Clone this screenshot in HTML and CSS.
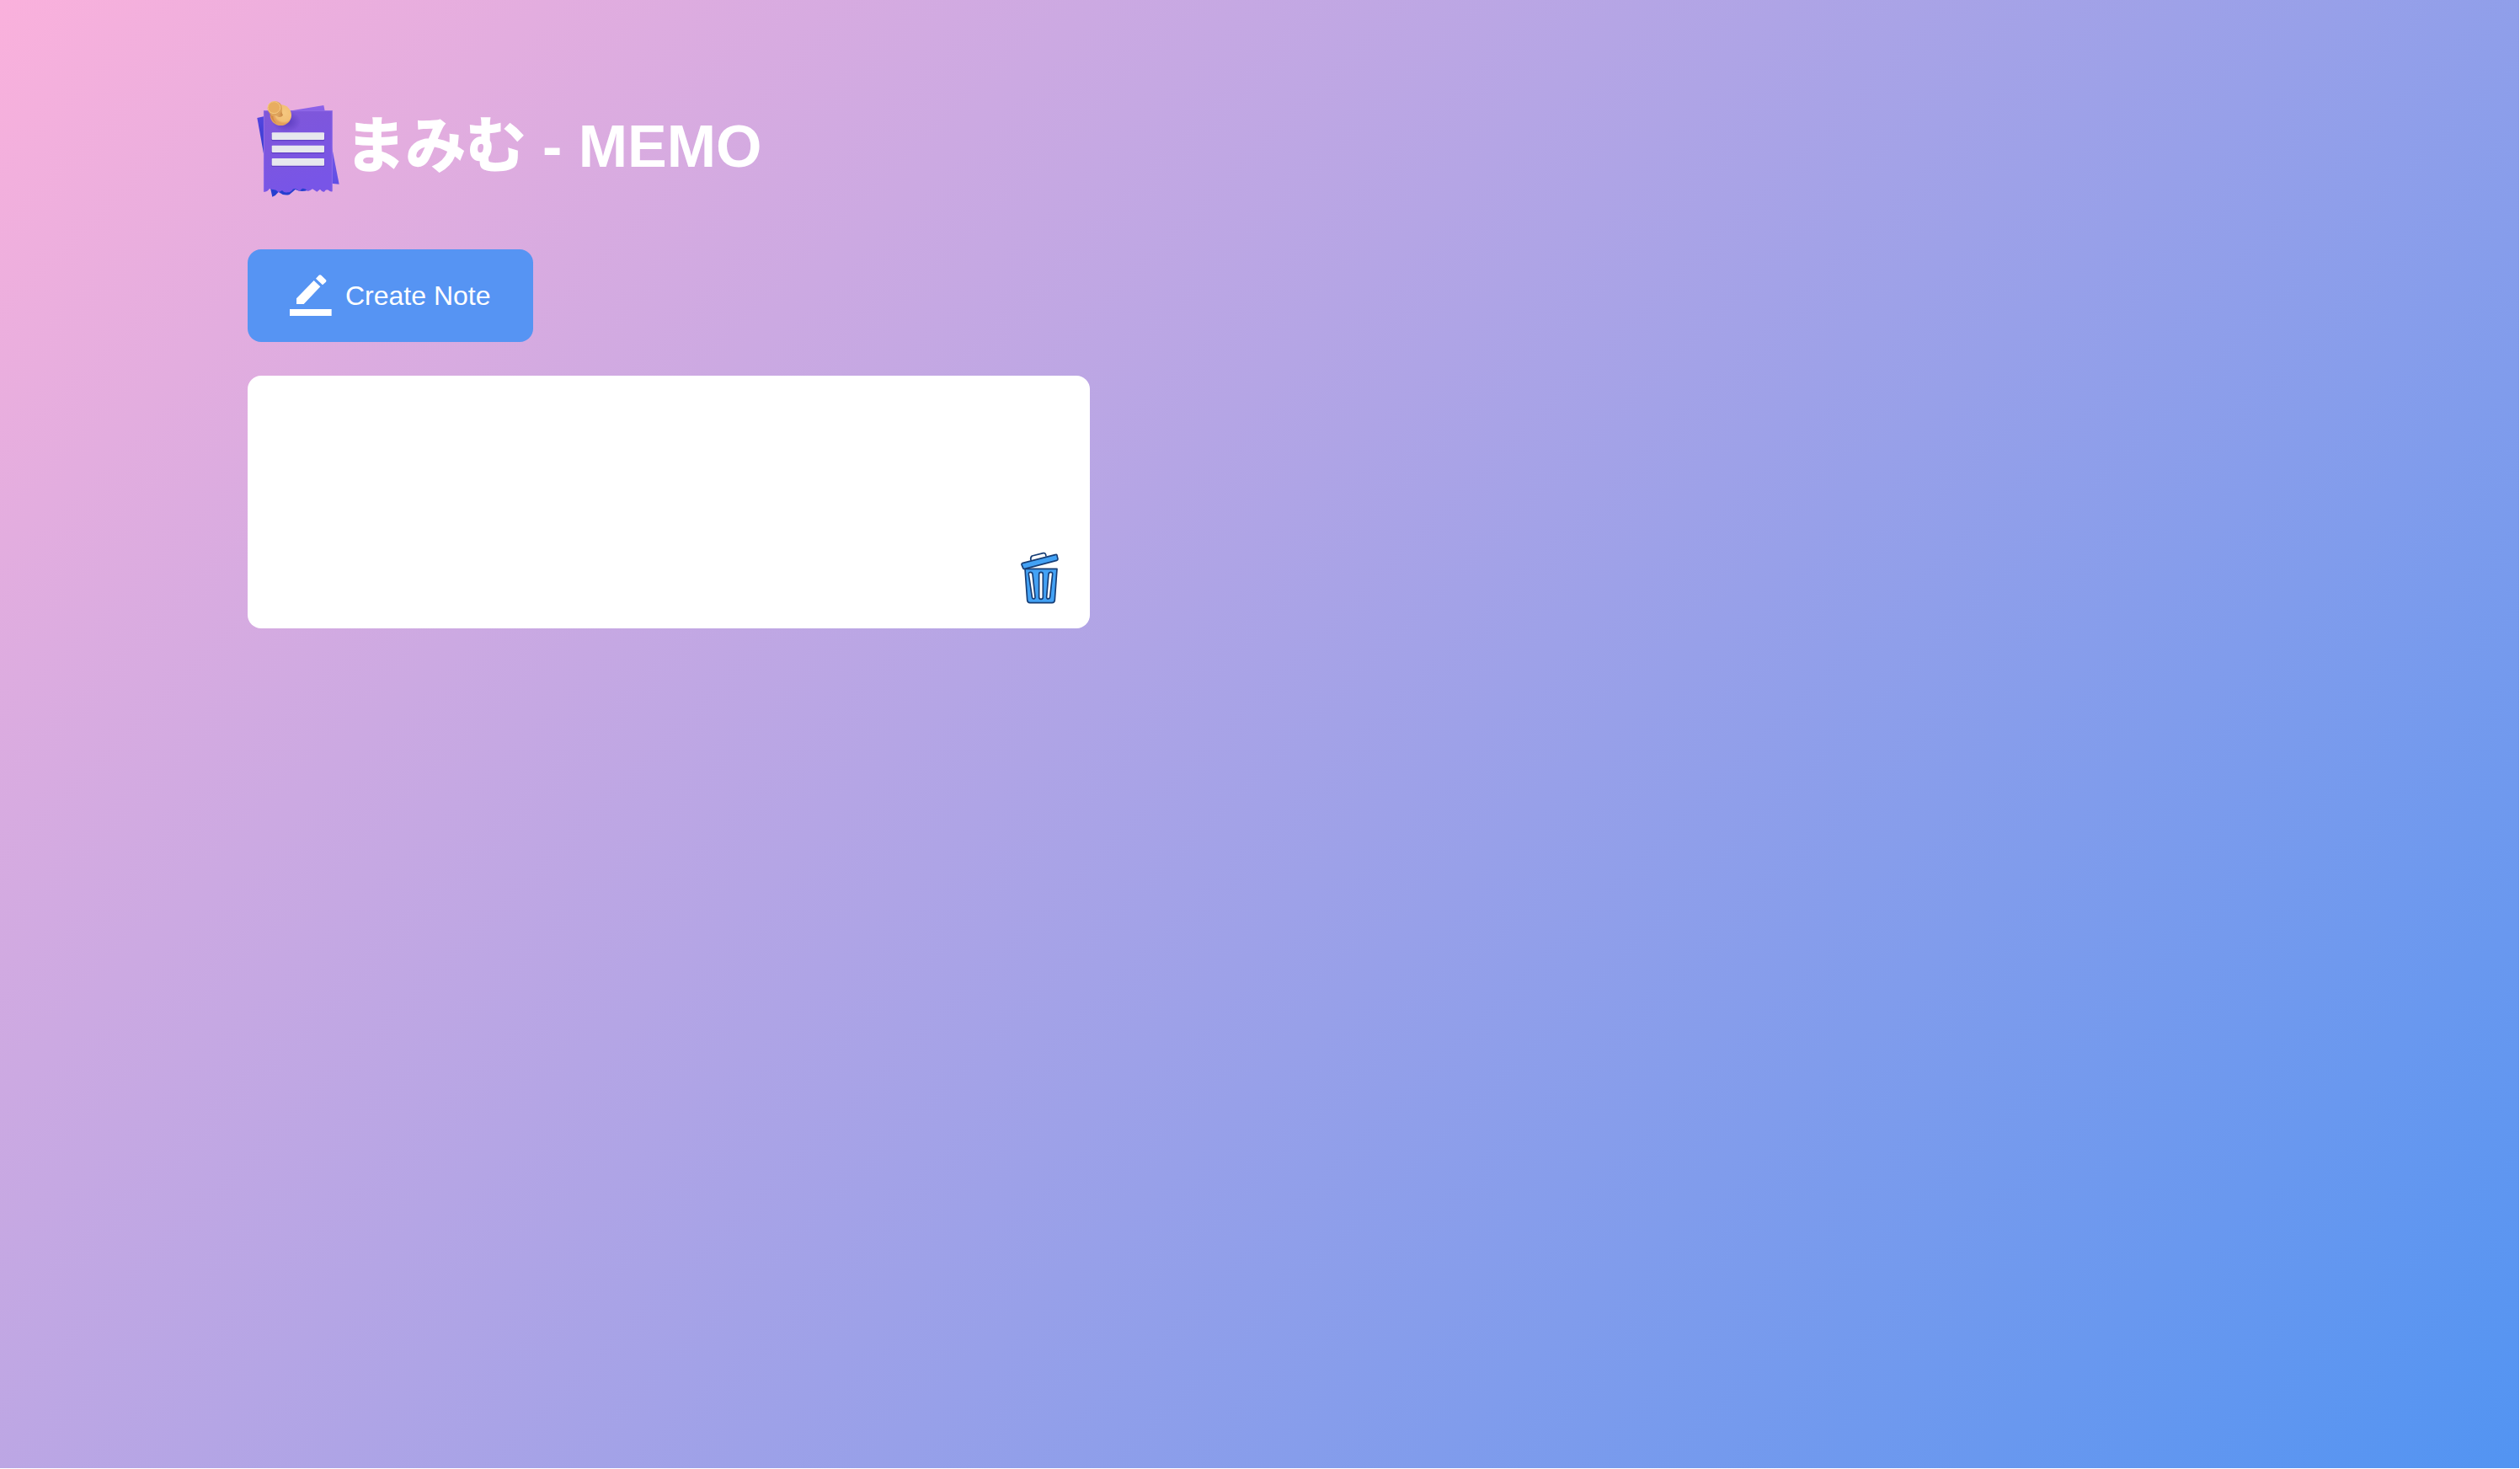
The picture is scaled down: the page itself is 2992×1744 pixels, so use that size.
FILE: index.html
```html
<!DOCTYPE html>
<html lang="ja">
<head>
<meta charset="utf-8">
<title>まみむ - MEMO</title>
<link rel="stylesheet" href="styles.css">
</head>
<body>
<main class="container">
  <h1 class="title">
    <svg class="logo" viewBox="0 0 390 420" aria-hidden="true">
      <defs>
        <linearGradient id="paper" x1="0" y1="0" x2="0.3" y2="1"><stop offset="0" stop-color="#8057d8"/><stop offset="1" stop-color="#7855e7"/></linearGradient>
        <linearGradient id="back" x1="0" y1="0" x2="0" y2="1"><stop offset="0" stop-color="#5546e0"/><stop offset="1" stop-color="#2636c9"/></linearGradient>
        <linearGradient id="side" x1="0" y1="0" x2="0" y2="1"><stop offset="0" stop-color="#8d62e8"/><stop offset="1" stop-color="#604ee5"/></linearGradient>
        <radialGradient id="shade"><stop offset="0" stop-color="#5135b6" stop-opacity=".8"/><stop offset="1" stop-color="#5135b6" stop-opacity="0"/></radialGradient>
        <radialGradient id="disc" cx=".65" cy=".4"><stop offset="0" stop-color="#f5c780"/><stop offset=".8" stop-color="#f2bf74"/><stop offset="1" stop-color="#e3a05c"/></radialGradient>
        <linearGradient id="stem" x1="0" y1="0" x2="1" y2="0"><stop offset="0" stop-color="#f6c981"/><stop offset="1" stop-color="#c98643"/></linearGradient>
      </defs>
      <path d="M46 105L75 98V265Z" fill="url(#back)"/>
      <path d="M160 80L283 60L287 80L338 341L308 338L160 240Z" fill="url(#side)"/>
      <path d="M92 350L100 386Q112 382 122 369Q141 384 161 378L182 360Q202 371 225 363L240 345Z" fill="#263fd0"/>
      <path d="M69 79H314V367Q306 369 300 362Q291 358 285 368Q278 370 270 359L259 368L243 358Q235 365 226 366Q216 354 206 357L196 366Q183 353 173 359Q166 370 154 370Q143 373 135 363L122 370Q112 358 101 360L90 357Q83 369 69 368Z" fill="url(#paper)"/>
      <path d="M70 367V80H313V365" fill="none" stroke="#9c77ed" stroke-width="2"/>
      <ellipse cx="150" cy="118" rx="52" ry="38" fill="url(#shade)"/>
      <g fill="#6040c5"><rect x="97" y="160" width="189" height="27" rx="4"/><rect x="97" y="206" width="189" height="26" rx="4"/><rect x="97" y="252" width="189" height="27" rx="4"/></g>
      <g fill="#e7e8ee"><rect x="98" y="157" width="187" height="26" rx="3"/><rect x="98" y="203" width="187" height="25" rx="3"/><rect x="98" y="249" width="187" height="26" rx="3"/></g>
      <ellipse cx="130" cy="95" rx="38" ry="37" fill="url(#disc)"/>
      <path d="M92 91Q100 120 116 125Q102 111 103 98Z" fill="#d48a45"/>
      <path d="M98 92L133 72Q133 88 138 95Q131 105 120 101Q110 94 98 97Z" fill="url(#stem)"/>
      <ellipse cx="109" cy="71" rx="26" ry="26" fill="#dda35b"/>
      <ellipse cx="106" cy="68" rx="22" ry="21" fill="#e8ad60" stroke="#f7ca83" stroke-width="3"/>
    </svg>
    <span class="title-text"><span class="kana">まみむ</span> - MEMO</span>
  </h1>
  <button class="create" type="button">
    <svg class="pencil" viewBox="0 0 150 150" aria-hidden="true">
      <path d="M24 85L86 21L109 43L50 105H24Z M93 14L104 2Q108-1 112 2L129 19Q132 23 128 27L117 37Z M0 123H149V147H0Z" fill="#fff"/>
    </svg>
    <span>Create Note</span>
  </button>
  <section class="notes">
    <div class="note" contenteditable="true"></div>
    <button class="delete" type="button" aria-label="Delete">
      <svg class="trash" viewBox="62 42 140 190" aria-hidden="true">
        <g stroke="#173e76" stroke-width="5" stroke-linejoin="round" fill="#43a2f5">
          <path d="M101 76Q98 66 105 60L145 50Q154 48 155 62" fill="#fff"/>
          <path d="M80 106H194L186 217Q185 227 176 227H98Q89 227 88 217Z"/>
          <path d="M70 86L190 55Q193 54 194 58L197 71Q197 75 193 76L79 106Q75 108 73 103L68 91Q67 87 70 86Z"/>
          <g fill="#fff">
            <path d="M93 125C92 116 106 116 107 125L116 206C117 215 106 215 105 206Z"/>
            <rect x="130" y="118" width="14" height="96" rx="7"/>
            <path d="M164 125C165 116 179 116 178 125L169 206C168 215 156 215 157 206Z"/>
          </g>
        </g>
      </svg>
    </button>
  </section>
</main>
</body>
</html>
```
FILE: styles.css
```css
* {
  box-sizing: border-box;
  margin: 0;
  padding: 0;
}

body {
  padding: 0 1px 1px 0;
  font-family: "Liberation Sans", Arial, "Noto Sans CJK JP", sans-serif;
  background: #fff;
}

.container {
  display: flex;
  flex-direction: column;
  align-items: flex-start;
  width: 100%;
  min-height: calc(100vh - 1px);
  padding: 105px 294px 0;
  color: #fff;
  background: linear-gradient(135deg, #fab1dc, #5294f2);
}

.title {
  display: flex;
  align-items: center;
  height: 140px;
  font-size: 70px;
  line-height: 136px;
  white-space: nowrap;
}

.logo {
  width: 130px;
  height: 140px;
  margin-left: -4px;
}

.title-text {
  margin: 0 0 3px -10px;
}

.kana {
  font-size: 71.5px;
  line-height: 1;
  -webkit-text-stroke: 1.5px #fff;
}

.create {
  display: flex;
  align-items: center;
  gap: 16px;
  width: 339px;
  height: 110px;
  margin-top: 51px;
  padding-left: 50px;
  border: 0;
  border-radius: 16px;
  font: 32px "Liberation Sans", Arial, sans-serif;
  color: #fff;
  background: #5694f3;
}

.pencil {
  width: 50px;
  height: 50px;
}

.notes {
  display: flex;
  align-items: flex-end;
  width: 1000px;
  height: 300px;
  margin-top: 40px;
  padding: 0 36px 29px 40px;
  border-radius: 16px;
  background: #fff;
}

.note {
  flex: 1;
  align-self: stretch;
  color: #222;
}

.delete {
  display: flex;
  border: 0;
  background: none;
}

.trash {
  width: 46.67px;
  height: 63.33px;
}
```
